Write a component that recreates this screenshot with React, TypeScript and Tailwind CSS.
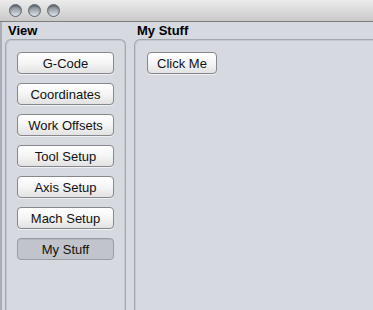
import React from 'react';

const items = ['G-Code', 'Coordinates', 'Work Offsets', 'Tool Setup', 'Axis Setup', 'Mach Setup', 'My Stuff'];

const Light = () => (
  <div className="w-[13px] h-[13px] rounded-full border border-[#5f666e] bg-gradient-to-b from-[#79808a] via-[#a9b0b7] to-[#e0e5ea] shadow-[inset_0_1px_2px_rgba(0,0,0,0.35)]" />
);

const AquaButton = ({ label, selected }: { label: string; selected?: boolean }) => (
  <button
    className={
      selected
        ? 'h-[22px] rounded-[4px] border border-[#999ca2] bg-[#c1c4ca] text-[13px] text-[#111] leading-none shadow-[inset_0_1px_0_rgba(0,0,0,0.06)]'
        : 'h-[22px] rounded-[4px] border border-[#86888c] bg-gradient-to-b from-white via-[#f5f5f5] to-[#e2e2e2] text-[13px] text-[#111] leading-none shadow-[0_1px_0_rgba(255,255,255,0.6)]'
    }
  >
    {label}
  </button>
);

export default function App() {
  const selected = 'My Stuff';
  return (
    <div className="w-[373px] h-[310px] overflow-hidden bg-[#d6d9e0] flex flex-col font-['Liberation_Sans',Arial,sans-serif]">
      <div className="h-[22px] shrink-0 flex items-center gap-[6px] pl-[9px] bg-gradient-to-b from-[#ececec] to-[#c9c9c9] border-b border-[#7d7d7d]">
        <Light />
        <Light />
        <Light />
      </div>
      <div className="flex flex-1 pl-[5px] gap-[8px] border-l-2 border-[#a9acb2]">
        <div className="w-[121px] shrink-0 flex flex-col -ml-[2px]">
          <div className="h-[17px] pt-[1px] pl-[3px] text-[13px] leading-[16px] font-bold text-black">View</div>
          <div className="flex-1 rounded-t-[6px] border border-b-0 border-[#a4a7ad] shadow-[inset_1px_1px_0_#c4c7cd,inset_-1px_0_0_#c4c7cd] pt-[12px] px-[11px] flex flex-col gap-[9px]">
            {items.map((it) => (
              <AquaButton key={it} label={it} selected={it === selected} />
            ))}
          </div>
        </div>
        <div className="flex-1 flex flex-col -mr-[20px]">
          <div className="h-[17px] pt-[1px] pl-[3px] text-[13px] leading-[16px] font-bold text-black">My Stuff</div>
          <div className="flex-1 rounded-t-[6px] border border-b-0 border-[#a4a7ad] shadow-[inset_1px_1px_0_#c4c7cd] pt-[12px] px-[12px]">
            <div className="w-[70px] flex flex-col">
              <AquaButton label="Click Me" />
            </div>
          </div>
        </div>
      </div>
    </div>
  );
}
